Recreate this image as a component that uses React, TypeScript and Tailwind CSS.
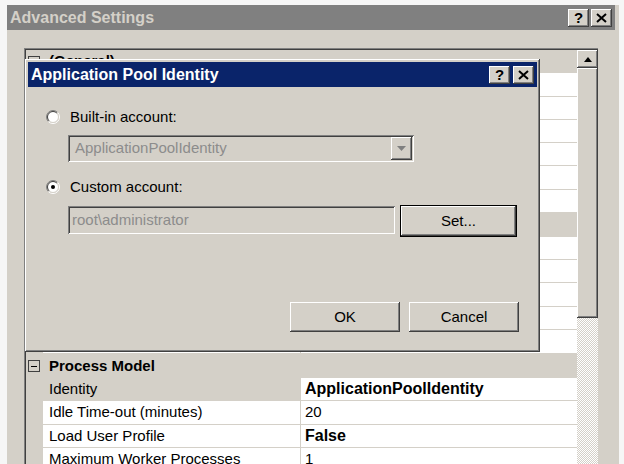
import React from 'react'

// classic 3d bevels
const raised =
  'shadow-[inset_-1px_-1px_#404040,inset_1px_1px_#ffffff,inset_-2px_-2px_#808080,inset_2px_2px_#d4d0c8]'
const sunken =
  'shadow-[inset_1px_1px_#808080,inset_-1px_-1px_#ffffff,inset_2px_2px_#404040,inset_-2px_-2px_#d4d0c8]'

type Row =
  | { kind: 'cat'; title: string; tall?: boolean }
  | { kind: 'prop'; name: string; value: string; bold?: boolean; tall?: boolean; selected?: boolean }

// rows under the dialog are left blank, only their cells show past its edge
const rows: Row[] = [
  { kind: 'cat', title: '(General)' },
  { kind: 'prop', name: '', value: '', tall: true },
  { kind: 'prop', name: '', value: '' },
  { kind: 'prop', name: '', value: '' },
  { kind: 'prop', name: '', value: '' },
  { kind: 'prop', name: '', value: '', tall: true },
  { kind: 'prop', name: '', value: '' },
  { kind: 'cat', title: '', tall: true },
  { kind: 'prop', name: '', value: '' },
  { kind: 'prop', name: '', value: '' },
  { kind: 'prop', name: '', value: '', tall: true },
  { kind: 'prop', name: '', value: '' },
  { kind: 'prop', name: '', value: '', tall: true },
  { kind: 'cat', title: 'Process Model', tall: true },
  { kind: 'prop', name: 'Identity', value: 'ApplicationPoolIdentity', bold: true, selected: true },
  { kind: 'prop', name: 'Idle Time-out (minutes)', value: '20', tall: true },
  { kind: 'prop', name: 'Load User Profile', value: 'False', bold: true },
  { kind: 'prop', name: 'Maximum Worker Processes', value: '1', tall: true },
]

function CaptionButton({ kind }: { kind: 'help' | 'close' }) {
  return (
    <div className={`w-[21px] h-[18px] bg-[#d4d0c8] ${raised} flex items-center justify-center`}>
      {kind === 'help' ? (
        <span className="font-bold text-[15px] leading-none text-black">?</span>
      ) : (
        <svg width="11" height="10" viewBox="0 0 11 10">
          <path d="M1 1 L10 9 M10 1 L1 9" stroke="#000" strokeWidth="2" />
        </svg>
      )}
    </div>
  )
}

function Radio({ checked }: { checked?: boolean }) {
  return (
    <svg width="14" height="14" viewBox="0 0 14 14" className="shrink-0">
      <circle cx="7" cy="7" r="5.5" fill="#fff" />
      <path d="M2.4 11.6A6.5 6.5 0 0 1 11.6 2.4" stroke="#808080" fill="none" />
      <path d="M11.6 2.4A6.5 6.5 0 0 1 2.4 11.6" stroke="#ffffff" fill="none" />
      <path d="M3.11 10.89A5.5 5.5 0 0 1 10.89 3.11" stroke="#404040" fill="none" />
      <path d="M10.89 3.11A5.5 5.5 0 0 1 3.11 10.89" stroke="#d4d0c8" fill="none" />
      {checked && <circle cx="7" cy="7" r="2" fill="#000" />}
    </svg>
  )
}

function MinusBox() {
  return (
    <div className="w-[12px] h-[12px] border border-[#404040] flex items-center justify-center">
      <div className="w-[6px] h-px bg-black" />
    </div>
  )
}

function GridRow({ row }: { row: Row }) {
  const h = row.tall ? 'h-[24px]' : 'h-[23px]'
  if (row.kind === 'cat') {
    return (
      <div className={`${h} shrink-0 bg-[#d4d0c8] flex items-center`}>
        <div className="w-[17px] pl-[2px]">
          <MinusBox />
        </div>
        {row.title && <span className="ml-[6px] font-bold text-[15px]">{row.title}</span>}
      </div>
    )
  }
  return (
    <div className={`${h} shrink-0 flex`}>
      <div className="w-[17px] bg-[#d4d0c8]" />
      <div
        className={`w-[257px] ${row.selected ? 'bg-[#d4d0c8]' : 'bg-white'} border-b border-[#d4d0c8] pl-[6px] flex items-center whitespace-nowrap overflow-hidden`}
      >
        {row.name}
      </div>
      <div className="w-px bg-[#d4d0c8]" />
      <div
        className={`flex-1 bg-white border-b border-[#d4d0c8] pl-[4px] flex items-center whitespace-nowrap ${row.bold ? 'font-bold text-[16px]' : ''}`}
      >
        {row.value}
      </div>
    </div>
  )
}

function Button({ label, width, focused }: { label: string; width: string; focused?: boolean }) {
  return (
    <div className={`${width} ${focused ? 'h-[32px] border border-black' : 'h-[30px]'} bg-[#d4d0c8]`}>
      <div className={`w-full h-full ${raised} flex items-center justify-center`}>{label}</div>
    </div>
  )
}

export default function App() {
  return (
    <div className="relative w-[624px] h-[464px] overflow-hidden bg-[#f6f6f6] font-['Liberation_Sans',Arial,sans-serif] text-[15px] text-black">
      {/* Advanced Settings window */}
      <div className="ml-[7px] mt-[5px] w-[612px] h-[459px] bg-[#d4d0c8] flex flex-col">
        <div className="h-[25px] mr-[4px] shrink-0 bg-[#808080] flex items-center pl-[3px] pr-[3px]">
          <span className="font-bold text-[16px] text-[#d4d0c8]">Advanced Settings</span>
          <div className="ml-auto flex gap-[2px]">
            <CaptionButton kind="help" />
            <CaptionButton kind="close" />
          </div>
        </div>

        <div className="pt-[18px] pl-[17px] pr-[21px] flex-1 min-h-0">
          <div className="h-full border-t border-l border-[#808080]">
            <div className="h-full border-t border-l border-[#404040] flex">
              <div className="flex-1 flex flex-col overflow-hidden">
                {rows.map((r, i) => (
                  <GridRow key={i} row={r} />
                ))}
              </div>
              <div className="w-[21px] flex flex-col">
                <div className={`h-[18px] shrink-0 ${raised} flex items-center justify-center`}>
                  <svg width="8" height="5" viewBox="0 0 8 5">
                    <path d="M4 0 L8 5 L0 5 Z" fill="#000" />
                  </svg>
                </div>
                <div className={`h-[250px] shrink-0 ${raised}`} />
                <div className="flex-1 bg-[image:repeating-conic-gradient(#ffffff_0%_25%,#d4d0c8_0%_50%)] bg-[length:2px_2px]" />
              </div>
            </div>
          </div>
        </div>
      </div>

      {/* Application Pool Identity dialog */}
      <div className={`absolute left-[25px] top-[59px] w-[515px] h-[293px] bg-[#d4d0c8] p-[3px] ${raised}`}>
        <div className="h-[25px] bg-[#0a246a] flex items-center pl-[3px] pr-[3px]">
          <span className="font-bold text-[16px] text-white">Application Pool Identity</span>
          <div className="ml-auto flex gap-[3px]">
            <CaptionButton kind="help" />
            <CaptionButton kind="close" />
          </div>
        </div>

        <div className="pl-[18px] pr-[18px] flex flex-col">
          <div className="mt-[20px] h-[20px] flex items-center gap-[10px]">
            <Radio />
            <span>Built-in account:</span>
          </div>
          <div className={`ml-[22px] mt-[8px] w-[346px] h-[27px] p-[2px] flex ${sunken}`}>
            <span className="pl-[5px] self-center text-[#8c8c8c]">ApplicationPoolIdentity</span>
            <div className={`ml-auto w-[21px] h-full ${raised} flex items-center justify-center`}>
              <svg width="9" height="5" viewBox="0 0 9 5">
                <path d="M0 0 L9 0 L4.5 5 Z" fill="#808080" />
              </svg>
            </div>
          </div>

          <div className="mt-[15px] h-[20px] flex items-center gap-[10px]">
            <Radio checked />
            <span>Custom account:</span>
          </div>
          <div className="mt-[8px] flex">
            <div className={`ml-[22px] mt-[1px] w-[327px] h-[28px] pl-[4px] flex items-center text-[#8c8c8c] ${sunken}`}>
              {'root\\administrator'}
            </div>
            <div className="ml-[5px]">
              <Button label="Set..." width="w-[117px]" focused />
            </div>
          </div>

          <div className="mt-[65px] flex justify-end gap-[9px]">
            <Button label="OK" width="w-[110px]" />
            <Button label="Cancel" width="w-[110px]" />
          </div>
        </div>
      </div>
    </div>
  )
}
